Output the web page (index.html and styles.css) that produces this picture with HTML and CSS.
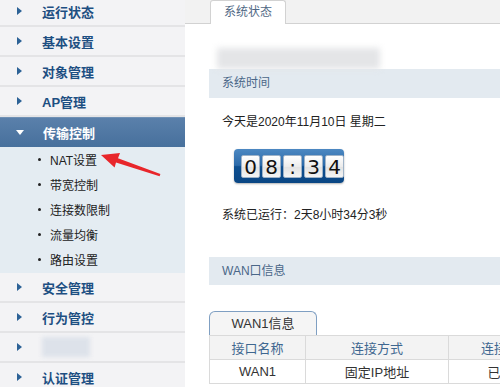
FILE: index.html
```html
<!DOCTYPE html>
<html lang="zh-CN">
<head>
<meta charset="UTF-8">
<title>系统状态</title>
<link rel="stylesheet" href="styles.css">
</head>
<body>

<div class="page">
    <aside class="sidebar">
        <ul class="menu">
            <li class="menu-item"><span class="caret"></span>运行状态</li>
            <li class="menu-item"><span class="caret"></span>基本设置</li>
            <li class="menu-item"><span class="caret"></span>对象管理</li>
            <li class="menu-item"><span class="caret"></span>AP管理</li>
            <li class="menu-item open"><span class="caret"></span>传输控制</li>
            <li class="submenu">
                <div class="sub-item"><span class="dot"></span>NAT设置</div>
                <div class="sub-item"><span class="dot"></span>带宽控制</div>
                <div class="sub-item"><span class="dot"></span>连接数限制</div>
                <div class="sub-item"><span class="dot"></span>流量均衡</div>
                <div class="sub-item"><span class="dot"></span>路由设置</div>
            </li>
            <li class="menu-item"><span class="caret"></span>安全管理</li>
            <li class="menu-item"><span class="caret"></span>行为管控</li>
            <li class="menu-item"><span class="caret"></span><span class="blur-label"></span></li>
            <li class="menu-item"><span class="caret"></span>认证管理</li>
        </ul>
        <!-- red pointer over the menu -->
        <svg class="pointer" width="70" height="34" viewBox="0 0 70 34">
            <polygon fill="#e8262b" points="6,10 25,8 23,13.3 65.4,29 64.6,31.2 21,17.4 19.6,22.6"/>
        </svg>
    </aside>

    <main class="main">
        <div class="tabbar">
            <div class="tab">系统状态</div>
        </div>
        <div class="content">
            <div class="blur-title"></div>

            <div class="section-head">系统时间</div>
            <p class="line">今天是2020年11月10日 星期二</p>
            <div class="clock">
                <span class="card">0</span>
                <span class="card">8</span>
                <span class="card">:</span>
                <span class="card">3</span>
                <span class="card">4</span>
            </div>
            <p class="line uptime">系统已运行：2天8小时34分3秒</p>

            <div class="section-head wan">WAN口信息</div>
            <div class="wan-tab">WAN1信息</div>
            <table class="wan-table">
                <tr>
                    <th class="c1">接口名称</th>
                    <th class="c2">连接方式</th>
                    <th class="c3">连接状态</th>
                </tr>
                <tr>
                    <td>WAN1</td>
                    <td>固定IP地址</td>
                    <td>已连接</td>
                </tr>
            </table>
        </div>
    </main>
</div>

</body>
</html>
```

FILE: styles.css
```css
body {
    margin: 0;
    font-family: "Liberation Sans", "Noto Sans CJK SC", sans-serif;
    font-size: 12px;
    color: #333;
    overflow: hidden;
}
.page {
    display: flex;
    width: 500px;
    height: 387px;
    overflow: hidden;
}
.sidebar {
    position: relative;
    width: 185px;
    flex-shrink: 0;
    background: #f3f3f5;
}
.menu {
    list-style: none;
    margin: -3px 0 0 0;
    padding: 0;
}
.menu-item {
    display: flex;
    align-items: center;
    height: 28px;
    padding-left: 17px;
    border-bottom: 2px solid #e4e4e6;
    font-size: 13px;
    font-weight: bold;
    color: #1d4f82;
}
.caret {
    width: 0;
    height: 0;
    margin-right: 20px;
    border-left: 5px solid #2c6296;
    border-top: 4px solid transparent;
    border-bottom: 4px solid transparent;
}
.menu-item.open {
    height: 29px;
    border-bottom: none;
    border-top: 1px solid #6f90b4;
    background: linear-gradient(#5a80ab, #47709c);
    color: #fff;
}
.menu-item.open .caret {
    margin-left: -1px;
    margin-right: 19px;
    border-top: 5px solid #fff;
    border-left: 4px solid transparent;
    border-right: 4px solid transparent;
    border-bottom: none;
}
.submenu {
    background: #e4ecf2;
    padding: 0 0 1px 0;
}
.sub-item {
    display: flex;
    align-items: center;
    height: 25px;
    padding-left: 38px;
    font-size: 12px;
    color: #222;
}
.dot {
    width: 3px;
    height: 3px;
    border-radius: 50%;
    background: #222;
    margin-right: 9px;
}
.blur-label {
    width: 48px;
    height: 20px;
    background: #dde2ea;
    filter: blur(2px);
}
.pointer {
    position: absolute;
    left: 95px;
    top: 145px;
}
.main {
    flex: 1;
    overflow: hidden;
    background: #fff;
}
.tabbar {
    display: flex;
    align-items: flex-end;
    height: 23px;
    padding-left: 25px;
    background: #f2f2f2;
    border-bottom: 1px solid #d2d2d2;
}
.tab {
    width: 74px;
    height: 23px;
    margin-bottom: -1px;
    line-height: 23px;
    text-align: center;
    background: #fff;
    border: 1px solid #d2d2d2;
    border-bottom: none;
    border-radius: 3px 3px 0 0;
    color: #4f6884;
}
.content {
    padding-left: 24px;
    width: 420px;
}
.blur-title {
    width: 163px;
    height: 21px;
    margin: 24px 0 0 8px;
    background: #e4e5e7;
    filter: blur(3px);
}
.section-head {
    height: 29px;
    line-height: 29px;
    padding-left: 13px;
    background: #e3eaf0;
    color: #4a6788;
}
.line {
    margin: 16px 0 0 13px;
    line-height: 16px;
    color: #222;
}
.clock {
    display: flex;
    align-items: center;
    gap: 2px;
    width: 103px;
    height: 34px;
    margin: 19px 0 0 25px;
    padding-left: 7px;
    border-radius: 4px;
    background: linear-gradient(#4c88c2 0%, #2c6aa9 48%, #0e4f90 52%, #0a4684 100%);
    box-shadow: 0 1px 2px rgba(0, 0, 0, 0.3);
}
.card {
    width: 17px;
    height: 21px;
    line-height: 22px;
    text-align: center;
    font-family: "DejaVu Sans", sans-serif;
    font-size: 20px;
    color: #111;
    background: linear-gradient(#ffffff, #ececec 50%, #e2e2e2 51%, #f4f4f4);
    border: 1px solid #9fb3c8;
    border-radius: 2px;
}
.uptime {
    margin-top: 24px;
}
.section-head.wan {
    height: 28px;
    line-height: 28px;
    margin-top: 34px;
}
.wan-tab {
    width: 106px;
    height: 23px;
    margin-top: 26px;
    line-height: 24px;
    text-align: center;
    background: #f5f5f5;
    border: 1px solid #7f9fc2;
    border-bottom: none;
    border-radius: 6px 6px 0 0;
    font-size: 13px;
    color: #333;
}
.wan-table {
    border-collapse: collapse;
    width: 357px;
    table-layout: fixed;
}
.wan-table th,
.wan-table td {
    height: 23px;
    border: 1px solid #dadada;
    text-align: center;
    font-size: 13px;
    padding: 0;
    white-space: nowrap;
    overflow: hidden;
}
.wan-table th {
    background: #f3f3f3;
    font-weight: normal;
    color: #3f6790;
}
.wan-table td {
    background: #fff;
    color: #333;
}
.wan-table .c1 {
    width: 95px;
}
.wan-table .c2 {
    width: 142px;
}
```
